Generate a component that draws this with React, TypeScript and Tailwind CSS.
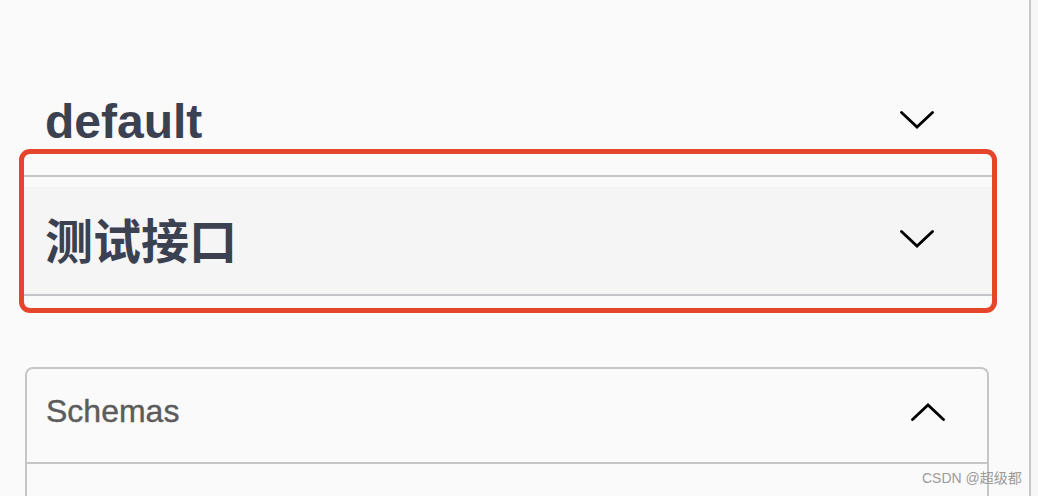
import React from "react";

function Chevron({ up = false }: { up?: boolean }) {
  return (
    <svg width="34" height="18" viewBox="0 0 34 18" className="block shrink-0">
      <path
        d={up ? "M1.5 16.5L17 2L32.5 16.5" : "M1.5 1.5L17 16L32.5 1.5"}
        fill="none"
        stroke="#000"
        strokeWidth="2.8"
        strokeLinecap="round"
        strokeLinejoin="miter"
      />
    </svg>
  );
}

export default function App() {
  return (
    <div className="relative flex h-[496px] w-[1038px] overflow-hidden bg-[#fafafa] font-['Liberation_Sans','Noto_Sans_CJK_SC',sans-serif]">
      <div className="w-[1029px] shrink-0">
        {/* default tag */}
        <div className="ml-[45px] mt-[98px] flex h-[48px] w-[889px] items-center justify-between">
          <h3 className="text-[48px] font-bold leading-none text-[#3b4151]">default</h3>
          <div className="-mt-[4px]">
            <Chevron />
          </div>
        </div>

        {/* highlighted tag */}
        <div className="ml-[19px] mt-[3px] w-[978px] rounded-[11px] border-[5px] border-[#e5452b]">
          <div className="h-[21px]" />
          <div className="h-[2px] bg-[#c4c5c9]" />
          <div className="h-[10px]" />
          <div className="flex h-[107px] items-center justify-between bg-[#f5f5f5] pl-[21px] pr-[58px]">
            <h3 className="-mt-[5px] font-['Noto_Sans_CJK_SC',sans-serif] text-[48px] font-bold leading-none text-[#3b4151]">
              测试接口
            </h3>
            <div className="-mt-[4px]">
              <Chevron />
            </div>
          </div>
          <div className="h-[2px] bg-[#c4c5c9]" />
          <div className="h-[12px]" />
        </div>

        {/* Schemas */}
        <div className="ml-[25px] mt-[54px] w-[964px] rounded-t-[8px] border-2 border-b-0 border-[#c6c6c6]">
          <div className="flex h-[95px] justify-between border-b-2 border-[#c6c6c6] pl-[19px] pr-[42px]">
            <h4 className="pt-[26px] text-[32px] leading-none text-[#5c5c5c] [-webkit-text-stroke:0.4px_#5c5c5c]">Schemas</h4>
            <div className="mt-[34px]">
              <Chevron up />
            </div>
          </div>
          <div className="h-[120px]" />
        </div>
      </div>
      <div className="w-[2px] shrink-0 bg-[#c8c8c8]" />
      <div className="flex-1 bg-[#f7f7f7]" />

      <span className="absolute left-[922px] top-[468px] text-[14px] leading-[20px] text-[#9a9a9a]">
        CSDN @超级都
      </span>
    </div>
  );
}
